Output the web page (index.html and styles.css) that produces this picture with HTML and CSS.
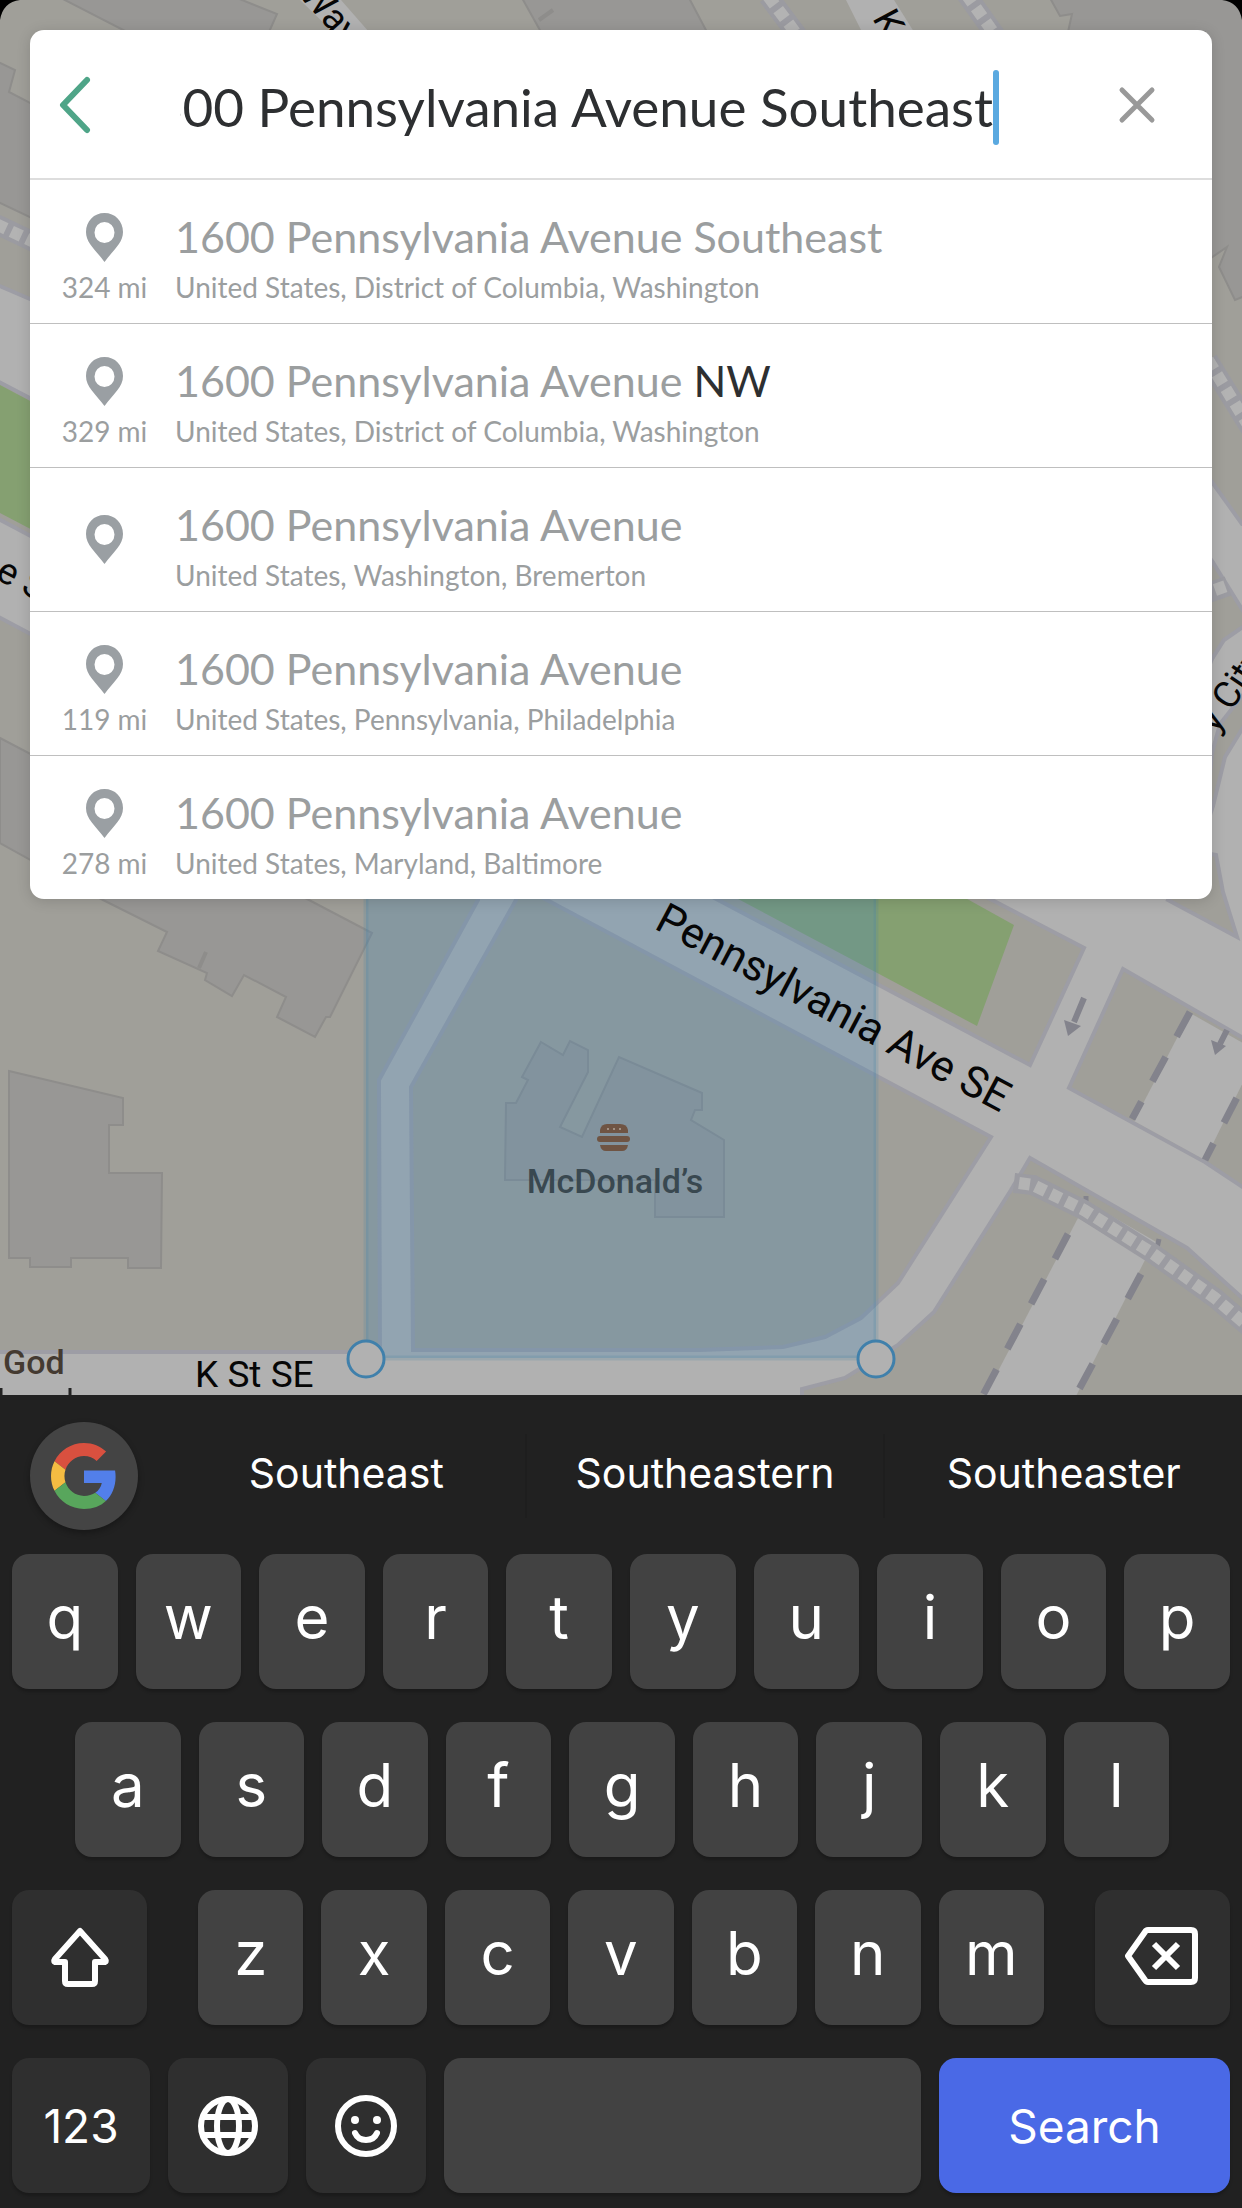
FILE: index.html
```html
<!DOCTYPE html>
<html lang="en">
<head>
    <meta charset="UTF-8">
    <meta name="viewport" content="width=device-width, initial-scale=1.0">
    <title>Address search</title>
    <link rel="stylesheet" href="styles.css">
</head>
<body>

<main class="stage">
    <!-- map -->
    <svg class="map" viewBox="0 0 1242 1395" preserveAspectRatio="xMidYMin slice" aria-hidden="true">
        <rect class="road" width="1242" height="1395"/>

        <!-- blocks -->
        <g class="block">
            <path d="M-5-5H1247V524L1242 524L1212 482L1100 340L900 300L30 299L-5 284Z"/>
            <path d="M-5 615L478 872V900L379 1080L380 1352H-5Z"/>
            <path d="M-5 380L1084 948L1030 1065L-5 517Z"/>
            <path d="M516 884L547 900L991 1137L898 1283L861 1318L825 1337L783 1347L700 1350H413L411 1087L516 900Z"/>
            <path d="M1123 969L1250 1042V1192L1205 1162L1069 1088Z"/>
            <path d="M1030 1158L1187 1248L1250 1305V1400H802V1389L845 1378L898 1345L934 1312L1011 1190Z"/>
            <path d="M1168 900L1237 937L1223 892L1216 855L1190 850Z"/>
            <path d="M1200 546L1212 561L1250 622L1224 640L1212 659L1195 700Z"/>
            <path d="M1250 686L1220 724L1212 753L1205 830L1213 806L1225 757L1250 716Z"/>
        </g>
        <path class="park" d="M0 385L969 900L1014 925L977 1026L740 900L0 513Z"/>

        <!-- side streets -->
        <g class="road">
            <path d="M1190 1013L1250 1047V1068L1205 1160L1134 1121Z"/>
            <path d="M1078 1218L1146 1258L1074 1400H983Z"/>
            <path d="M1089 1203L1158 1243L1153 1251L1086 1214Z"/>
            <path d="M300 0H341L369 32H333Z"/>
            <path d="M846 0H894L914 32H862Z"/>
        </g>
        <g class="dashes">
            <path d="M1190 1012L1132 1119"/>
            <path d="M1249 1074L1205 1160" stroke-dashoffset="24"/>
            <path d="M1068 1234L983 1395"/>
            <path d="M1141 1274L1076 1395"/>
        </g>
        <g class="stops">
            <path d="M1086 1196V1205M1159 1239L1157 1248"/>
        </g>

        <!-- footways -->
        <g class="foot-edge">
            <path d="M1014 1183L1033 1185L1084 1210L1152 1253L1215 1298L1250 1328"/>
            <path d="M-4 224L38 244"/>
            <path d="M768-4L798 36"/>
            <path d="M966-6L996 36"/>
            <path d="M1208 360L1250 428"/>
            <path d="M1208 593L1228 586"/>
        </g>
        <g class="foot">
            <path d="M1019 1183L1033 1185L1084 1210L1152 1253L1215 1298L1250 1328"/>
            <path d="M-4 224L38 244"/>
            <path d="M768-4L798 36"/>
            <path d="M966-6L996 36"/>
            <path d="M1208 360L1250 428"/>
            <path d="M1215 590L1226 586"/>
        </g>

        <!-- buildings -->
        <g class="building">
            <path d="M0 738L309 900L372 933L330 1017L326 1017L315 1037L277 1017L286 997L244 975L232 996L205 980L207 973L158 951L167 932L103 900L0 843Z"/>
            <path d="M9 1071L123 1098V1125H109V1173H162L161 1268H128V1258H71V1267H30V1258H9Z"/>
            <path d="M541 1042L563 1055L570 1041L588 1050V1072L560 1127L582 1137L619 1057L702 1093V1110H695L691 1120L724 1140V1217H655V1180H505L506 1103H516L528 1080L522 1077Z"/>
            <path d="M-2 62L15 70L9 92L40 108V222L-2 202Z"/>
            <path d="M61-2H237L277 14L269 32H127Z"/>
            <path d="M522-2H689L707 32H541Z"/>
            <path d="M1050-2L1060 16L1072 14L1068 32H1205V262L1227 247L1219 267L1235 300L1245 296V-2Z"/>
        </g>
        <path class="detail" d="M206 952L199 968M553 10L539 20"/>

        <!-- selected area -->
        <path class="area" d="M366 880H876V1358H366Z"/>
        <path class="area-edge" d="M366 880V1358H876V880"/>

        <g class="arrows">
            <path class="shaft" d="M1084 998L1074 1022M1227 1030L1220 1044"/>
            <path d="M1064 1020L1081 1026L1068 1036Z"/>
            <path d="M1211 1040L1226 1046L1215 1055Z"/>
        </g>

        <g class="burger">
            <path d="M600 1133V1130Q601 1124 607 1124H620Q627 1124 628 1130V1133Z"/>
            <rect x="597" y="1136" width="33" height="6" rx="3"/>
            <path d="M600 1145H628Q627 1151 622 1151H606Q601 1151 600 1145Z"/>
            <circle class="seed" cx="608" cy="1129" r="1"/>
            <circle class="seed" cx="614" cy="1129" r="1"/>
            <circle class="seed" cx="620" cy="1129" r="1"/>
        </g>

        <text class="street" transform="translate(653 928) rotate(28)">Pennsylvania Ave SE</text>
        <text class="street small" x="195" y="1387">K St SE</text>
        <text class="street small" transform="translate(-6 578) rotate(28)">e SE</text>
        <text class="street small" transform="translate(298 -5) rotate(48)">Way</text>
        <text class="street small" transform="translate(872 18) rotate(62)">K</text>
        <text class="street small" transform="translate(1216 734) rotate(-56)">y City</text>
        <text class="poi" x="615" y="1193" text-anchor="middle">McDonald’s</text>
        <text class="poi church" x="3" y="1374">God</text>
        <path class="tick" d="M1 1388V1395M70 1388V1395"/>

        <circle class="handle" cx="366" cy="1359" r="18"/>
        <circle class="handle" cx="876" cy="1359" r="18"/>
        <path class="corner" d="M0 0H20Q3 2 0 20ZM1242 0H1222Q1239 2 1242 20Z"/>
    </svg>

    <!-- search card -->
    <section class="card">
        <form class="search" id="search-form">
            <button type="button" class="icon-btn back" aria-label="Back">
                <svg width="36" height="60" viewBox="0 0 36 60"><path d="M31 6L7 31L31 56"/></svg>
            </button>
            <label class="sr-only" for="address">Address</label>
            <input type="text" id="address" value="1600 Pennsylvania Avenue Southeast" autocomplete="off">
            <span class="caret"></span>
            <button type="reset" class="icon-btn close" aria-label="Clear">
                <svg width="40" height="40" viewBox="0 0 40 40"><path d="M5 6L35 36M35 6L5 36"/></svg>
            </button>
        </form>

        <ul class="results">
            <li><button type="button" class="result">
                <span class="place near">
                    <svg class="pin" viewBox="0 0 37 49"><path d="M18.500 0C8 0 0 8 0 19C0 30 9 36 18.500 49C28 36 37 30 37 19C37 8 29 0 18.500 0ZM18.500 9A10 10.500 0 1 1 18.500 30A10 10.500 0 1 1 18.500 9Z"/></svg>
                    <span class="distance">324 mi</span>
                </span>
                <span class="text">
                    <span class="title">1600 Pennsylvania Avenue Southeast</span>
                    <span class="sub">United States, District of Columbia, Washington</span>
                </span>
            </button></li>
            <li><button type="button" class="result">
                <span class="place near">
                    <svg class="pin" viewBox="0 0 37 49"><path d="M18.500 0C8 0 0 8 0 19C0 30 9 36 18.500 49C28 36 37 30 37 19C37 8 29 0 18.500 0ZM18.500 9A10 10.500 0 1 1 18.500 30A10 10.500 0 1 1 18.500 9Z"/></svg>
                    <span class="distance">329 mi</span>
                </span>
                <span class="text">
                    <span class="title">1600 Pennsylvania Avenue <b>NW</b></span>
                    <span class="sub">United States, District of Columbia, Washington</span>
                </span>
            </button></li>
            <li><button type="button" class="result">
                <span class="place">
                    <svg class="pin" viewBox="0 0 37 49"><path d="M18.500 0C8 0 0 8 0 19C0 30 9 36 18.500 49C28 36 37 30 37 19C37 8 29 0 18.500 0ZM18.500 9A10 10.500 0 1 1 18.500 30A10 10.500 0 1 1 18.500 9Z"/></svg>
                </span>
                <span class="text">
                    <span class="title">1600 Pennsylvania Avenue</span>
                    <span class="sub">United States, Washington, Bremerton</span>
                </span>
            </button></li>
            <li><button type="button" class="result">
                <span class="place near">
                    <svg class="pin" viewBox="0 0 37 49"><path d="M18.500 0C8 0 0 8 0 19C0 30 9 36 18.500 49C28 36 37 30 37 19C37 8 29 0 18.500 0ZM18.500 9A10 10.500 0 1 1 18.500 30A10 10.500 0 1 1 18.500 9Z"/></svg>
                    <span class="distance">119 mi</span>
                </span>
                <span class="text">
                    <span class="title">1600 Pennsylvania Avenue</span>
                    <span class="sub">United States, Pennsylvania, Philadelphia</span>
                </span>
            </button></li>
            <li><button type="button" class="result">
                <span class="place near">
                    <svg class="pin" viewBox="0 0 37 49"><path d="M18.500 0C8 0 0 8 0 19C0 30 9 36 18.500 49C28 36 37 30 37 19C37 8 29 0 18.500 0ZM18.500 9A10 10.500 0 1 1 18.500 30A10 10.500 0 1 1 18.500 9Z"/></svg>
                    <span class="distance">278 mi</span>
                </span>
                <span class="text">
                    <span class="title">1600 Pennsylvania Avenue</span>
                    <span class="sub">United States, Maryland, Baltimore</span>
                </span>
            </button></li>
        </ul>
    </section>
</main>

<!-- keyboard -->
<section class="keyboard">
    <div class="suggestions">
        <button class="google" aria-label="Google">
            <svg width="66" height="66" viewBox="0 0 48 48">
                <path fill="#d9503f" d="M24 9.500c3.540 0 6.710 1.220 9.210 3.600l6.850-6.850C35.900 2.380 30.470 0 24 0 14.620 0 6.510 5.380 2.560 13.220l7.980 6.190C12.430 13.720 17.740 9.500 24 9.500z"/>
                <path fill="#527fea" d="M46.980 24.550c0-1.570-.15-3.090-.38-4.550H24v9.020h12.940c-.58 2.960-2.260 5.480-4.780 7.180l7.730 6c4.510-4.180 7.090-10.360 7.090-17.650z"/>
                <path fill="#f5bc42" d="M10.530 28.590c-.48-1.450-.76-2.990-.76-4.590s.27-3.140.76-4.590l-7.980-6.190C.92 16.460 0 20.120 0 24c0 3.880.92 7.540 2.560 10.780l7.970-6.190z"/>
                <path fill="#58a65c" d="M24 48c6.480 0 11.930-2.130 15.890-5.810l-7.730-6c-2.150 1.450-4.920 2.300-8.160 2.300-6.260 0-11.570-4.220-13.470-9.910l-7.980 6.190C6.510 42.620 14.620 48 24 48z"/>
            </svg>
        </button>
        <button class="word">Southeast</button>
        <button class="word">Southeastern</button>
        <button class="word">Southeaster</button>
    </div>

    <div class="keys">
        <button class="key">q</button>
        <button class="key">w</button>
        <button class="key">e</button>
        <button class="key">r</button>
        <button class="key">t</button>
        <button class="key">y</button>
        <button class="key">u</button>
        <button class="key">i</button>
        <button class="key">o</button>
        <button class="key">p</button>
    </div>
    <div class="keys middle">
        <button class="key">a</button>
        <button class="key">s</button>
        <button class="key">d</button>
        <button class="key">f</button>
        <button class="key">g</button>
        <button class="key">h</button>
        <button class="key">j</button>
        <button class="key">k</button>
        <button class="key">l</button>
    </div>
    <div class="keys">
        <button class="key dark shift" aria-label="Shift">
            <svg width="60" height="64" viewBox="0 0 60 64"><path d="M30 7L5 35Q3 38 6 38H15V57Q15 60 18 60H42Q45 60 45 57V38H54Q57 38 55 35Z"/></svg>
        </button>
        <button class="key">z</button>
        <button class="key">x</button>
        <button class="key">c</button>
        <button class="key">v</button>
        <button class="key">b</button>
        <button class="key">n</button>
        <button class="key">m</button>
        <button class="key dark delete" aria-label="Delete">
            <svg width="74" height="60" viewBox="0 0 74 60"><path d="M23 4H66Q70 4 70 8V52Q70 56 66 56H23Q21 56 20 54L3 30L20 6Q21 4 23 4Z"/><path d="M29 18L53 42M53 18L29 42"/></svg>
        </button>
    </div>
    <div class="keys">
        <button class="key dark numbers">123</button>
        <button class="key dark tool" aria-label="Language">
            <svg width="60" height="60" viewBox="0 0 60 60"><circle cx="30" cy="30" r="27"/><ellipse cx="30" cy="30" rx="11" ry="27"/><path d="M5 21H55M5 39H55"/></svg>
        </button>
        <button class="key dark tool" aria-label="Emoji">
            <svg width="62" height="62" viewBox="0 0 62 62"><circle cx="31" cy="31" r="28"/><path d="M20 38Q23 45 31 45Q39 45 42 38" stroke-linecap="round"/><g class="eyes"><circle cx="20" cy="25" r="4"/><circle cx="42" cy="25" r="4"/></g></svg>
        </button>
        <button class="key space" aria-label="Space"></button>
        <button class="key go" type="submit" form="search-form">Search</button>
    </div>
</section>

<script>
// keep the end of a long address in view
var address = document.getElementById("address");
address.scrollLeft = address.scrollWidth;
</script>

</body>
</html>
```
FILE: styles.css
```css
* {
    box-sizing: border-box;
}

body {
    margin: 0;
    min-height: 100vh;
    display: flex;
    flex-direction: column;
    background: #212121;
    font-family: Lato, "Open Sans", sans-serif;
}

button {
    font-family: inherit;
    border: none;
    padding: 0;
    background: none;
    cursor: pointer;
}

svg {
    display: block;
}

.sr-only {
    position: absolute;
    width: 1px;
    height: 1px;
    overflow: hidden;
    clip-path: inset(50%);
}

/* map */
.stage {
    position: relative;
    flex: 1;
    padding: 30px;
    overflow: hidden;
}

.map {
    position: absolute;
    inset: 0;
    width: 100%;
    height: 100%;
}

.road {
    fill: #b1b1b1;
}

.block {
    fill: #a09f99;
    stroke: #9d9da5;
    stroke-width: 4;
}

.park {
    fill: #85a071;
}

.building {
    fill: #989795;
    stroke: #8e8d8b;
    stroke-width: 2;
}

.building path:nth-child(3) {
    fill: #9a9996;
}

.detail {
    stroke: #8e8d8b;
    stroke-width: 4;
}

.dashes {
    fill: none;
    stroke: #83838c;
    stroke-width: 7;
    stroke-dasharray: 28 23;
}

.stops {
    stroke: #83838c;
    stroke-width: 5;
}

.foot-edge {
    fill: none;
    stroke: #9b9ba1;
    stroke-width: 20;
}

.foot {
    fill: none;
    stroke: #b3b3b3;
    stroke-width: 12;
    stroke-dasharray: 11 6;
}

.area {
    fill: rgba(77, 137, 180, 0.3);
}

.area-edge {
    fill: none;
    stroke: rgba(70, 130, 160, 0.2);
    stroke-width: 5;
}

.arrows {
    fill: #83838c;
}

.shaft {
    stroke: #83838c;
    stroke-width: 6;
}

.burger {
    fill: #6f5443;
}

.seed {
    fill: #b1a598;
}

.street {
    font-family: Roboto, sans-serif;
    font-size: 43px;
    fill: #060606;
}

.street.small {
    font-size: 37px;
}

.poi {
    font-family: Roboto, sans-serif;
    font-size: 34px;
    font-weight: 500;
    fill: #394850;
}

.poi.church {
    fill: #443a31;
}

.tick {
    stroke: #222;
    stroke-width: 3;
}

.handle {
    fill: #b1b1b1;
    stroke: #4080ab;
    stroke-width: 3;
}

.corner {
    fill: #000;
}

/* search card */
.card {
    position: relative;
    background: #fff;
    border-radius: 14px;
    overflow: hidden;
    box-shadow: 0 2px 14px rgba(0, 0, 0, 0.15);
}

.search {
    display: flex;
    align-items: center;
    height: 150px;
    border-bottom: 2px solid #ddd;
}

.icon-btn {
    display: flex;
    align-items: center;
    justify-content: center;
    height: 100%;
    flex: none;
}

.icon-btn path {
    fill: none;
    stroke-linecap: round;
    stroke-linejoin: round;
}

.back {
    width: 88px;
    margin-right: 62px;
}

.back path {
    stroke: #4fa588;
    stroke-width: 6;
}

.close {
    width: 150px;
    margin-left: 63px;
}

.close path {
    stroke: #999;
    stroke-width: 5;
}

#address {
    flex: 1;
    min-width: 0;
    height: 80px;
    padding: 4px 0 0;
    border: none;
    outline: none;
    font-family: inherit;
    font-size: 53px;
    color: #2d2f31;
    background: none;
}

.caret {
    width: 6px;
    height: 75px;
    margin-top: 6px;
    border-radius: 3px;
    background: #5aa9e0;
}

.results {
    list-style: none;
    margin: 0;
    padding: 0;
}

.results li + li {
    border-top: 1px solid #bfbfbf;
}

.result {
    display: flex;
    gap: 8px;
    width: 100%;
    height: 143px;
    padding: 0 12px;
    text-align: left;
    color: #9b9e9f;
}

.place {
    display: flex;
    flex-direction: column;
    align-items: center;
    justify-content: center;
    gap: 8px;
    width: 125px;
    height: 100%;
    flex: none;
}

.near {
    padding-top: 14px;
}

.pin {
    width: 37px;
    height: 49px;
    fill: #9a9fa3;
}

.distance,
.sub {
    font-size: 28px;
    line-height: 34px;
}

.text {
    display: flex;
    flex-direction: column;
    gap: 9px;
    padding-top: 33px;
}

.title {
    font-size: 43px;
    line-height: 48px;
}

.title b {
    font-weight: 400;
    color: #2d2f31;
}

/* keyboard */
.keyboard {
    padding-bottom: 15px;
    font-family: Inter, sans-serif;
    background: #212121;
}

.keyboard button {
    color: #fff;
}

.suggestions {
    display: flex;
    align-items: center;
    height: 159px;
    padding: 3px 0 0 30px;
}

.google {
    display: flex;
    align-items: center;
    justify-content: center;
    width: 108px;
    height: 108px;
    margin-right: 30px;
    border-radius: 50%;
    background: #444;
    box-shadow: 0 3px 6px rgba(0, 0, 0, 0.3);
}

.word {
    flex: 1;
    height: 84px;
    padding-bottom: 6px;
    font-size: 41px;
}

.word + .word {
    border-left: 2px solid #1e1e1e;
}

.keys {
    display: flex;
    gap: 18px;
    padding: 0 12px;
}

.keys + .keys {
    margin-top: 33px;
}

.keys.middle {
    padding: 0 73px 0 75px;
}

.key {
    display: flex;
    align-items: center;
    justify-content: center;
    flex: 1;
    min-width: 0;
    height: 135px;
    padding-bottom: 10px;
    border-radius: 17px;
    font-size: 60px;
    background: #424242;
    box-shadow: 0 3px 3px rgba(0, 0, 0, 0.2);
}

.dark {
    background: #2f2f2f;
}

.key svg {
    fill: none;
    stroke: #fff;
    stroke-width: 6;
    stroke-linejoin: round;
}

.key .eyes {
    fill: #fff;
    stroke: none;
}

.shift,
.delete {
    flex: none;
    width: 135px;
    padding-bottom: 4px;
}

.shift {
    margin-right: 33px;
}

.delete {
    margin-left: 33px;
}

.numbers {
    flex: none;
    width: 138px;
    padding-bottom: 0;
    font-size: 46px;
}

.tool {
    flex: none;
    width: 120px;
    padding-bottom: 0;
}

.go {
    flex: none;
    width: 291px;
    padding-bottom: 0;
    font-size: 46px;
    background: #4a69e6;
}
```
